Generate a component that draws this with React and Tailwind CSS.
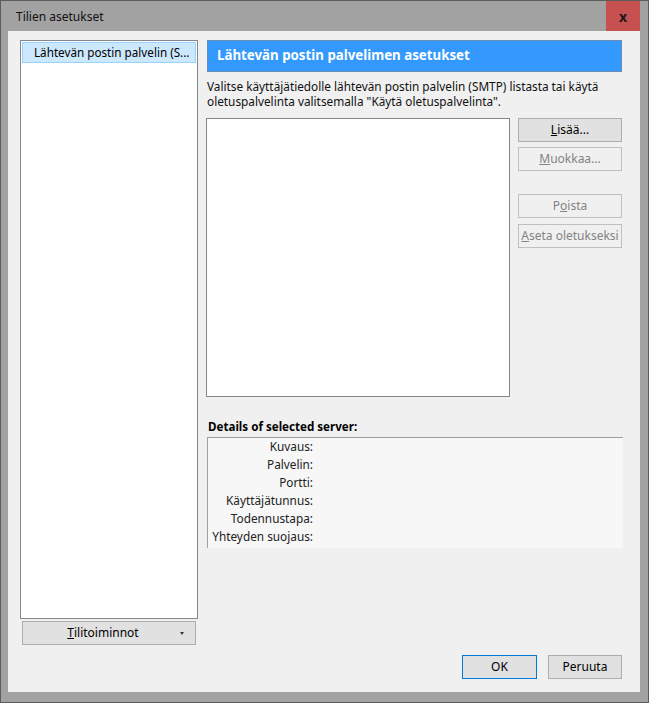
const font = { fontFamily: '"Noto Sans", "Liberation Sans", sans-serif' };

function Btn({ children, disabled, primary, className = '' }) {
  return (
    <div
      className={`h-[24px] flex items-center justify-center text-[12px] border ${
        disabled
          ? 'bg-[#f0f0f0] border-[#bfbfbf] text-[#838383]'
          : primary
          ? 'bg-[#e1e1e1] border-[#0078d7] text-black'
          : 'bg-[#e1e1e1] border-[#adadad] text-black'
      } ${className}`}
    >
      {children}
    </div>
  );
}

const details = ['Kuvaus:', 'Palvelin:', 'Portti:', 'Käyttäjätunnus:', 'Todennustapa:', 'Yhteyden suojaus:'];

export default function App() {
  return (
    <div
      className="w-[649px] h-[703px] bg-[#a2a2a2] border border-[#5c5c5c] flex flex-col text-black"
      style={font}
    >
      <div className="h-[30px] flex items-stretch justify-between">
        <div className="pl-[15px] pt-[1px] flex items-center text-[12px] text-[#111]">Tilien asetukset</div>
        <div className="w-[34px] mr-[8px] bg-[#c75050] flex items-center justify-center text-[14px] font-bold text-[#1a1a1a]">
          x
        </div>
      </div>

      <div className="flex-1 ml-[7px] mr-[8px] mb-[10px] bg-[#f0f0f0] flex pt-[9px]">
        {/* left column */}
        <div className="ml-[12px] w-[178px] flex flex-col">
          <div className="h-[579px] bg-white border border-[#828790] p-[1px]">
            <div className="h-[21px] bg-[#cce8ff] border border-[#99d1ff] flex items-center pl-[11px] text-[11.7px] whitespace-nowrap overflow-hidden">
              Lähtevän postin palvelin (S...
            </div>
          </div>
          <Btn className="mt-[2px] mx-[2px] relative pr-[12px]">
            <span>
              <span className="underline">T</span>ilitoiminnot
            </span>
            <span className="absolute right-[11px] top-[10px] w-0 h-0 border-l-[2px] border-r-[2px] border-t-[3px] border-l-transparent border-r-transparent border-t-[#333]" />
          </Btn>
        </div>

        {/* right column */}
        <div className="ml-[9px] w-[416px] flex flex-col pb-[13px]">
          <div className="h-[32px] w-[415px] bg-[#3399ff] border border-[#6a8db8] flex items-center pl-[9px] text-white font-bold text-[13.3px]">
            Lähtevän postin palvelimen asetukset
          </div>
          <div className="mt-[7px] text-[11.8px] leading-[15px] text-[#111]">
            <div>Valitse käyttäjätiedolle lähtevän postin palvelin (SMTP) listasta tai käytä</div>
            <div>oletuspalvelinta valitsemalla "Käytä oletuspalvelinta".</div>
          </div>

          <div className="mt-[9px] flex -ml-[1px]">
            <div className="w-[304px] h-[279px] bg-white border border-[#828790]" />
            <div className="ml-[8px] w-[104px] flex flex-col">
              <Btn>
                <span>
                  <span className="underline">L</span>isää...
                </span>
              </Btn>
              <Btn disabled className="mt-[5px]">
                <span>
                  <span className="underline">M</span>uokkaa...
                </span>
              </Btn>
              <Btn disabled className="mt-[23px]">
                <span>
                  P<span className="underline">o</span>ista
                </span>
              </Btn>
              <Btn disabled className="mt-[6px]">
                <span>
                  <span className="underline">A</span>seta oletukseksi
                </span>
              </Btn>
            </div>
          </div>

          <div className="mt-[22px] pl-[1px] text-[11.6px] font-bold leading-[15px]">Details of selected server:</div>
          <div className="mt-[3px] w-[416px] h-[111px] bg-[#f7f7f7] border-t border-l border-[#a0a0a0]">
            {details.map((d) => (
              <div key={d} className="w-[105px] h-[18px] flex items-center justify-end text-[11.8px] text-[#222]">
                {d}
              </div>
            ))}
          </div>

          <div className="mt-auto flex justify-end gap-[11px] pr-[1px]">
            <Btn primary className="w-[75px]">OK</Btn>
            <Btn className="w-[74px]">Peruuta</Btn>
          </div>
        </div>
      </div>
    </div>
  );
}
